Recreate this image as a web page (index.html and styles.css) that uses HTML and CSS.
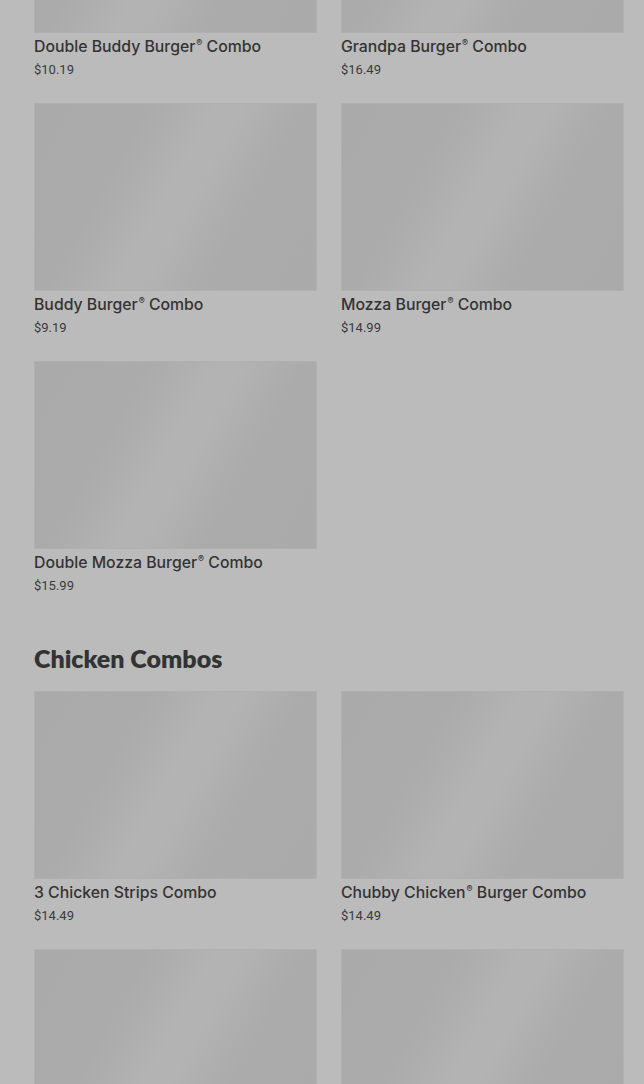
FILE: index.html
```html
<!DOCTYPE html>
<html lang="en">
<head>
<meta charset="utf-8">
<title>Menu</title>
<link rel="stylesheet" href="styles.css">
</head>
<body>
<main class="menu">
  <section class="section">
    <div class="grid">
      <article class="card"><div class="thumb"></div><h3 class="name">Double Buddy Burger<sup class="reg">®</sup> Combo</h3><p class="price">$10.19</p></article>
      <article class="card"><div class="thumb"></div><h3 class="name">Grandpa Burger<sup class="reg">®</sup> Combo</h3><p class="price">$16.49</p></article>
      <article class="card"><div class="thumb"></div><h3 class="name">Buddy Burger<sup class="reg">®</sup> Combo</h3><p class="price">$9.19</p></article>
      <article class="card"><div class="thumb"></div><h3 class="name">Mozza Burger<sup class="reg">®</sup> Combo</h3><p class="price">$14.99</p></article>
      <article class="card"><div class="thumb"></div><h3 class="name">Double Mozza Burger<sup class="reg">®</sup> Combo</h3><p class="price">$15.99</p></article>
    </div>
  </section>
  <section class="section">
    <h2 class="section-title">Chicken Combos</h2>
    <div class="grid">
      <article class="card"><div class="thumb"></div><h3 class="name">3 Chicken Strips Combo</h3><p class="price">$14.49</p></article>
      <article class="card"><div class="thumb"></div><h3 class="name">Chubby Chicken<sup class="reg">®</sup> Burger Combo</h3><p class="price">$14.49</p></article>
      <article class="card"><div class="thumb"></div></article>
      <article class="card"><div class="thumb"></div></article>
    </div>
  </section>
</main>
</body>
</html>
```

FILE: styles.css
```css
html, body {
  margin: 0;
  padding: 0;
  background: #bbbbbb;
  overflow: hidden;
}

body {
  font-family: Inter, "Noto Sans", sans-serif;
  color: #333333;
}

.menu {
  margin-top: -155px;
  padding: 0 20px 0 34px;
}

.grid {
  display: grid;
  grid-template-columns: 283px 283px;
  column-gap: 24px;
  row-gap: 23px;
}

.card {
  display: flex;
  flex-direction: column;
}

.thumb {
  height: 188px;
  background: linear-gradient(119deg, #aaaaaa 0%, #ababab 30%, #b3b3b3 48%, #b3b3b3 54%, #ababab 70%, #aaaaaa 100%);
  box-shadow: inset 0 0 0 1px #b0b0b0;
}

.name {
  margin: 2px 0 0;
  font-size: 15.8px;
  line-height: 24px;
  font-weight: 500;
  color: #333333;
}

.reg {
  font-size: 9px;
  line-height: 0;
  vertical-align: 6px;
  margin-left: 1px;
}

.price {
  margin: 1px 0 0;
  font-family: Roboto, "Noto Sans", sans-serif;
  font-size: 13px;
  line-height: 20px;
  color: #3a3a3a;
}

.section-title {
  margin: 44px 0 15px;
  font-family: Lato, "Noto Sans", sans-serif;
  font-weight: 800;
  font-size: 25px;
  line-height: 36px;
  color: #333333;
}
```
